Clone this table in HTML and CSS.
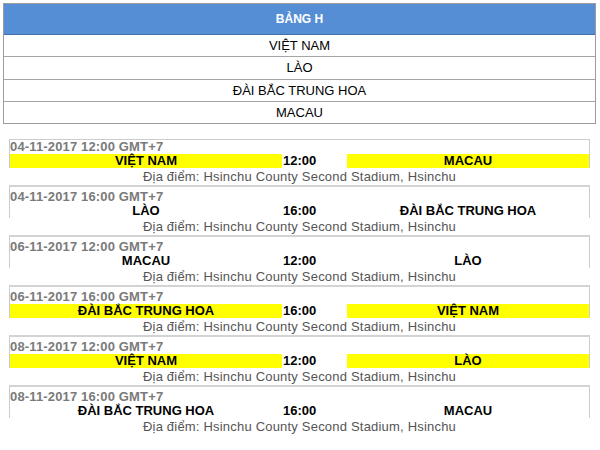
FILE: index.html
```html
<!DOCTYPE html>
<html lang="vi">
<head>
<meta charset="utf-8">
<title>Bảng H</title>
<link rel="stylesheet" href="styles.css">
</head>
<body>
<div class="group">
  <div class="group-head">BẢNG H</div>
  <div class="group-team">VIỆT NAM</div>
  <div class="group-team">LÀO</div>
  <div class="group-team">ĐÀI BẮC TRUNG HOA</div>
  <div class="group-team">MACAU</div>
</div>

<div class="matches">
  <div class="match">
    <div class="match-box">
      <div class="date">04-11-2017 12:00 GMT+7</div>
      <div class="teams">
        <div class="team hl">VIỆT NAM</div>
        <div class="time">12:00</div>
        <div class="team hl">MACAU</div>
      </div>
    </div>
    <div class="venue">Địa điểm: Hsinchu County Second Stadium, Hsinchu</div>
  </div>
  <div class="match">
    <div class="match-box">
      <div class="date">04-11-2017 16:00 GMT+7</div>
      <div class="teams">
        <div class="team">LÀO</div>
        <div class="time">16:00</div>
        <div class="team">ĐÀI BẮC TRUNG HOA</div>
      </div>
    </div>
    <div class="venue">Địa điểm: Hsinchu County Second Stadium, Hsinchu</div>
  </div>
  <div class="match">
    <div class="match-box">
      <div class="date">06-11-2017 12:00 GMT+7</div>
      <div class="teams">
        <div class="team">MACAU</div>
        <div class="time">12:00</div>
        <div class="team">LÀO</div>
      </div>
    </div>
    <div class="venue">Địa điểm: Hsinchu County Second Stadium, Hsinchu</div>
  </div>
  <div class="match">
    <div class="match-box">
      <div class="date">06-11-2017 16:00 GMT+7</div>
      <div class="teams">
        <div class="team hl">ĐÀI BẮC TRUNG HOA</div>
        <div class="time">16:00</div>
        <div class="team hl">VIỆT NAM</div>
      </div>
    </div>
    <div class="venue">Địa điểm: Hsinchu County Second Stadium, Hsinchu</div>
  </div>
  <div class="match">
    <div class="match-box">
      <div class="date">08-11-2017 12:00 GMT+7</div>
      <div class="teams">
        <div class="team hl">VIỆT NAM</div>
        <div class="time">12:00</div>
        <div class="team hl">LÀO</div>
      </div>
    </div>
    <div class="venue">Địa điểm: Hsinchu County Second Stadium, Hsinchu</div>
  </div>
  <div class="match">
    <div class="match-box">
      <div class="date">08-11-2017 16:00 GMT+7</div>
      <div class="teams">
        <div class="team">ĐÀI BẮC TRUNG HOA</div>
        <div class="time">16:00</div>
        <div class="team">MACAU</div>
      </div>
    </div>
    <div class="venue">Địa điểm: Hsinchu County Second Stadium, Hsinchu</div>
  </div>
</div>
</body>
</html>
```
FILE: styles.css
```css
html, body {
  margin: 0;
  padding: 0;
  background: #fff;
}
body {
  font-family: "Liberation Sans", Arial, sans-serif;
  color: #000;
}
.group {
  margin: 3px 4px 0 3px;
  border: 1px solid #9c9c9c;
}
.group-head {
  height: 30px;
  line-height: 30px;
  background: #558ed5;
  color: #fff;
  font-weight: bold;
  font-size: 12px;
  text-align: center;
  border-bottom: 1px solid #3d6eae;
}
.group-team {
  height: 21.33px;
  line-height: 21px;
  font-size: 13px;
  text-align: center;
}
.group-team + .group-team {
  border-top: 1px solid #a6a6a6;
}
.matches {
  margin: 15px 0 0 9px;
  width: 581px;
  border-top: 1px solid #cccccc;
}
.match {
  border-bottom: 2px solid #d3d3d3;
}
.match:last-child {
  border-bottom: none;
}
.match-box {
  border-left: 1px solid #cccccc;
  border-right: 1px solid #cccccc;
  padding-top: 3px;
}
.match:first-child .match-box {
  padding-top: 0;
}
.date {
  height: 14px;
  line-height: 14px;
  font-size: 13px;
  font-weight: bold;
  color: #7a7a7a;
  letter-spacing: 0.15px;
}
.teams {
  display: grid;
  grid-template-columns: 272px 65px 1fr;
  height: 14px;
  line-height: 14px;
  font-size: 13px;
  font-weight: bold;
}
.team {
  text-align: center;
}
.hl {
  background: #ffff00;
}
.time {
  padding-left: 1px;
}
.venue {
  height: 17px;
  line-height: 17px;
  font-size: 13px;
  color: #555;
  text-align: center;
  letter-spacing: 0.2px;
}
```
